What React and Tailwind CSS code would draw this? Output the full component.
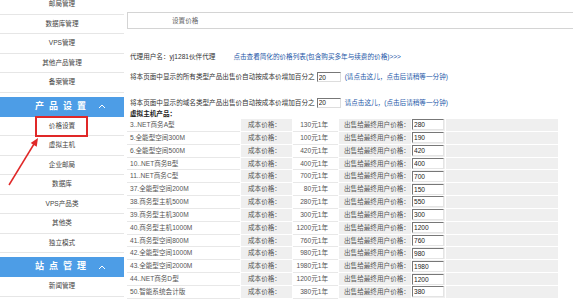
import React from 'react';

const font = { fontFamily: '"Liberation Sans", "Noto Sans CJK SC", sans-serif' };

const topItems = ['邮局管理', '数据库管理', 'VPS管理', '其他产品管理', '备案管理'];
const productItems = ['价格设置', '虚拟主机', '企业邮局', '数据库', 'VPS产品类', '其他类', '独立模式'];
const siteItems = ['新闻管理'];

const rows = [
  ['3..NET商务A型', '130', '280'],
  ['5.全能型空间300M', '100', '190'],
  ['6.全能型空间500M', '420', '420'],
  ['10..NET商务B型', '400', '400'],
  ['11..NET商务C型', '700', '700'],
  ['37.全能型空间200M', '80', '150'],
  ['38.商务型主机500M', '280', '550'],
  ['39.商务型主机300M', '300', '300'],
  ['40.商务型主机1000M', '1200', '1200'],
  ['41.商务型空间800M', '760', '760'],
  ['42.全能型空间1000M', '980', '980'],
  ['43.全能型空间2000M', '1980', '1980'],
  ['44..NET商务D型', '1200', '1200'],
  ['50.智能系统会计版', '380', '380'],
];

function SideItem({ label }) {
  return (
    <div className="flex h-[19.5px] shrink-0 items-center justify-center border-b border-[#e6e6e6] text-[6.6px] text-[#444]">
      {label}
    </div>
  );
}

function GroupHeader({ title }) {
  return (
    <div className="mt-[4px] flex h-[20px] shrink-0 items-center bg-[#4d9de6] pl-[35px] text-white">
      <span className="text-[9px] font-bold tracking-[5px]">{title}</span>
      <svg className="ml-[7px]" width="8" height="5" viewBox="0 0 8 5">
        <polyline points="1,4 4,1 7,4" fill="none" stroke="#fff" strokeWidth="1" />
      </svg>
    </div>
  );
}

function Sidebar() {
  return (
    <aside className="relative flex w-[124px] shrink-0 flex-col">
      <div className="-mt-[5px] flex flex-col">
        {topItems.map((item) => (
          <SideItem key={item} label={item} />
        ))}
      </div>
      <GroupHeader title="产品设置" />
      {productItems.map((item) => (
        <SideItem key={item} label={item} />
      ))}
      <GroupHeader title="站点管理" />
      {siteItems.map((item) => (
        <SideItem key={item} label={item} />
      ))}
    </aside>
  );
}

function PercentLine({ label, link }) {
  return (
    <div className="flex items-center">
      <span>{label}</span>
      <input
        readOnly
        value="20"
        className="ml-[2px] h-[10px] w-[24px] border border-t-[#777] border-l-[#777] border-b-[#ddd] border-r-[#ddd] bg-white pl-[1px] text-[6.6px] leading-none text-[#222]"
      />
      <span className="ml-[4px] text-[#2558a8]">{link}</span>
    </div>
  );
}

function PriceRow({ name, cost, price }) {
  return (
    <div className="flex h-[12.85px] gap-px">
      <div className="flex w-[113px] items-center border-b border-[#e8e8e8] bg-white pl-[3px] text-[#555]">
        {name}
      </div>
      <div className="flex w-[51px] items-center border-b border-white bg-[#efefef] pl-[7px] text-[#555]">
        成本价格：
      </div>
      <div className="flex w-[45px] items-center justify-end border-b border-[#e8e8e8] bg-white pr-[10px] text-[#555]">
        {cost}元1年
      </div>
      <div className="flex w-[72px] items-center border-b border-white bg-[#efefef] pl-[5px] text-[#555]">
        出售给最终用户价格：
      </div>
      <div className="flex w-[33px] items-center border-b border-white bg-[#efefef]">
        <input
          readOnly
          value={price}
          className="h-[11px] w-[32px] border border-t-[#777] border-l-[#777] border-b-[#e4e4e4] border-r-[#e4e4e4] bg-white pl-[1px] text-[6.6px] leading-none text-[#222]"
        />
      </div>
      <div className="w-[112px] border-b border-white bg-[#efefef]" />
    </div>
  );
}

export default function App() {
  return (
    <div className="relative flex h-[303px] w-[573px] overflow-hidden bg-white" style={font}>
      <Sidebar />

      <main className="ml-[3px] flex min-w-0 flex-1 flex-col text-[6.6px] text-[#333]">
        <div className="mt-[12px] flex h-[17px] items-center border border-r-0 border-[#d4d4d4] pl-[44px] text-[#666]">
          设置价格
        </div>

        <div className="mt-[22px] flex h-[12px] items-center pl-[3px]">
          <span>代理用户名：yj1281伙伴代理</span>
          <span className="ml-[18px] text-[#2558a8]">点击查看简化的价格列表(包含购买多年与续费的价格)&gt;&gt;&gt;</span>
        </div>

        <div className="mt-[8px] flex h-[12px] items-center pl-[3px]">
          <PercentLine
            label="将本页面中显示的所有类型产品出售价自动按成本价增加百分之"
            link="(请点击这儿，点击后请稍等一分钟)"
          />
        </div>

        <div className="mt-[14px] flex h-[11px] items-center pl-[3px]">
          <PercentLine
            label="将本页面中显示的域名类型产品出售价自动按成本价增加百分之"
            link="请点击这儿，(点击后请稍等一分钟)"
          />
        </div>

        <div className="flex h-[11px] items-center pl-[3px] font-bold text-[#222]">虚拟主机产品：</div>

        <div className="flex flex-col">
          {rows.map(([name, cost, price]) => (
            <PriceRow key={name} name={name} cost={cost} price={price} />
          ))}
        </div>
      </main>

      {/* annotation: highlight box and arrow */}
      <div className="absolute left-[35px] top-[116px] h-[21px] w-[53px] border-2 border-[#e02828]" />
      <svg className="absolute left-0 top-0" width="60" height="200" viewBox="0 0 60 200">
        <line x1="9" y1="185" x2="34" y2="144" stroke="#e02828" strokeWidth="1.5" />
        <polygon points="38,138 36.7,146.7 30.7,142.9" fill="#e02828" />
      </svg>
    </div>
  );
}
